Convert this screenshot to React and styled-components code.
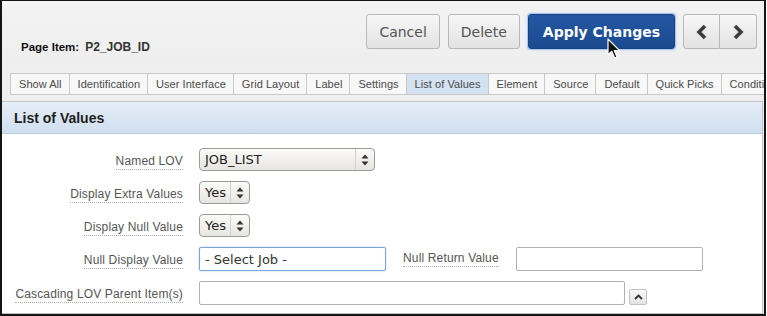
import React from 'react';
import styled, { createGlobalStyle } from 'styled-components';

const GlobalStyle = createGlobalStyle`
  html, body {
    margin: 0;
    padding: 0;
    background: #fff;
  }
  body {
    font-family: "Liberation Sans", Arial, sans-serif;
  }
`;

const Frame = styled.div`
  width: 766px;
  height: 316px;
  box-sizing: border-box;
  border: 2px solid #141414;
  border-top-width: 1px;
  background: #efefef;
  overflow: hidden;
  display: flex;
  flex-direction: column;
`;

const Header = styled.div`
  position: relative;
  height: 64px;
  flex-shrink: 0;
  display: flex;
  align-items: flex-start;
  justify-content: space-between;
  padding: 13px 7px 0 19px;
  box-sizing: border-box;
  background: linear-gradient(#f3f3f3, #eeeeee);
`;

const Title = styled.div`
  margin-top: 26px;
  font-size: 11.5px;
  font-weight: bold;
  color: #111;
  white-space: nowrap;
`;

const ItemName = styled.span`
  margin-left: 6px;
  color: #333;
  font-size: 12px;
`;

const Actions = styled.div`
  display: flex;
  align-items: center;
  gap: 8px;
`;

const Button = styled.button`
  height: 35px;
  box-sizing: border-box;
  padding: 0 ${(p) => (p.$primary ? 14 : 12)}px;
  border-radius: 3px;
  font-family: "DejaVu Sans", sans-serif;
  font-size: 14px;
  font-weight: ${(p) => (p.$primary ? 'bold' : 'normal')};
  color: ${(p) => (p.$primary ? '#fff' : '#555')};
  border: 1px solid ${(p) => (p.$primary ? '#1a4282' : '#b8b8b8')};
  background: ${(p) =>
    p.$primary
      ? 'linear-gradient(#2457a3, #1b4a90)'
      : 'linear-gradient(#f7f7f7, #e2e2e2)'};
  box-shadow: ${(p) => (p.$primary ? '0 0 0 1px #a9c8ee, 0 0 3px 1px #c4daf4' : 'none')};
  cursor: pointer;
`;

const NavGroup = styled.div`
  display: flex;
`;

const NavButton = styled.button`
  width: 37px;
  height: 35px;
  box-sizing: border-box;
  padding: 0;
  display: flex;
  align-items: center;
  justify-content: center;
  border: 1px solid #b8b8b8;
  border-radius: ${(p) => (p.$side === 'left' ? '3px 0 0 3px' : '0 3px 3px 0')};
  border-left-width: ${(p) => (p.$side === 'left' ? 1 : 0)}px;
  background: linear-gradient(#f7f7f7, #e2e2e2);
`;

const Cursor = styled.svg`
  position: absolute;
  left: 605px;
  top: 37px;
  width: 14px;
  height: 22px;
`;

const TabBar = styled.div`
  display: flex;
  margin: 8px 0 0 8px;
  height: 22px;
  flex-shrink: 0;
  overflow: hidden;
`;

const Tab = styled.div`
  flex-shrink: 0;
  height: 22px;
  box-sizing: border-box;
  padding: 0 7px 0 8px;
  display: flex;
  align-items: center;
  font-size: 11px;
  letter-spacing: 0.05px;
  color: #4a4a4a;
  white-space: nowrap;
  border: 1px solid #c9c9c9;
  border-left-width: ${(p) => (p.$first ? 1 : 0)}px;
  background: ${(p) => (p.$active ? '#d3e1f1' : '#f8f8f8')};
`;

const Region = styled.div`
  margin: 6px 1px 0 0;
  flex: 1;
  border: 1px solid #c2c2c2;
  border-left: none;
  background: #fff;
`;

const RegionHeader = styled.div`
  height: 32px;
  box-sizing: border-box;
  padding-left: 12px;
  display: flex;
  align-items: center;
  font-size: 14px;
  font-weight: bold;
  color: #1e1e1e;
  border-bottom: 1px solid #b9c9dc;
  background: linear-gradient(#e6eef8, #cfdeef);
`;

const Body = styled.div`
  padding-top: 14px;
  display: flex;
  flex-direction: column;
  gap: 10px;
`;

const Row = styled.div`
  display: flex;
  align-items: center;
  height: ${(p) => p.$h || 23}px;
`;

const LabelCell = styled.div`
  width: 181px;
  flex-shrink: 0;
  text-align: right;
  margin-right: 16px;
`;

const Label = styled.span`
  font-size: 12px;
  letter-spacing: 0.15px;
  color: #555;
  padding-bottom: 1px;
  border-bottom: 1px dotted #aaa;
  white-space: nowrap;
`;

const InlineLabel = styled(Label)`
  margin: 0 17px;
`;

const Select = styled.div`
  width: ${(p) => p.$w}px;
  height: 23px;
  box-sizing: border-box;
  display: flex;
  align-items: center;
  border: 1px solid #9c9a95;
  border-radius: 4px;
  background: linear-gradient(#fbfbfa, #e7e5e0);
  font-family: "DejaVu Sans", sans-serif;
  font-size: 13px;
  color: #222;
`;

const SelectText = styled.span`
  flex: 1;
  padding-left: 5px;
`;

const SelectArrow = styled.span`
  width: 18px;
  height: 100%;
  display: flex;
  align-items: center;
  justify-content: center;
  border-left: 1px solid #d3d1cc;
`;

const TextInput = styled.div`
  width: ${(p) => p.$w}px;
  height: 24px;
  box-sizing: border-box;
  display: flex;
  align-items: center;
  padding-left: 5px;
  border: 1px solid ${(p) => (p.$focus ? '#7ea6d6' : '#b1b1b1')};
  border-radius: 2px;
  background: #fff;
  box-shadow: ${(p) => (p.$focus ? '0 0 2px #a9c6ea' : 'none')};
  font-family: "DejaVu Sans", sans-serif;
  font-size: 13px;
  color: #333;
`;

const SmallButton = styled.div`
  width: 18px;
  height: 16px;
  box-sizing: border-box;
  margin: 7px 0 0 4px;
  display: flex;
  align-items: center;
  justify-content: center;
  border: 1px solid #c3c3c3;
  border-radius: 2px;
  background: linear-gradient(#f7f7f7, #e3e3e3);
`;

const Arrows = () => (
  <svg width="8" height="12" viewBox="0 0 8 12">
    <path d="M4 0.5 L7.5 4.5 L0.5 4.5 Z" fill="#333" />
    <path d="M4 11.5 L7.5 7.5 L0.5 7.5 Z" fill="#333" />
  </svg>
);

const Chevron = ({ dir }) => (
  <svg width="12" height="16" viewBox="0 0 12 16">
    <polyline
      points={dir === 'left' ? '9,2 3,8 9,14' : '3,2 9,8 3,14'}
      fill="none"
      stroke="#3d3d3d"
      strokeWidth="3.6"
      strokeLinejoin="miter"
    />
  </svg>
);

const tabs = [
  'Show All',
  'Identification',
  'User Interface',
  'Grid Layout',
  'Label',
  'Settings',
  'List of Values',
  'Element',
  'Source',
  'Default',
  'Quick Picks',
  'Condition',
];

export default function App() {
  return (
    <>
      <GlobalStyle />
      <Frame>
        <Header>
          <Title>
            Page Item:<ItemName>P2_JOB_ID</ItemName>
          </Title>
          <Actions>
            <Button>Cancel</Button>
            <Button>Delete</Button>
            <Button $primary>Apply Changes</Button>
            <NavGroup>
              <NavButton $side="left">
                <Chevron dir="left" />
              </NavButton>
              <NavButton $side="right">
                <Chevron dir="right" />
              </NavButton>
            </NavGroup>
          </Actions>
          <Cursor viewBox="0 0 14 22">
            <path
              d="M1 1 L1 17 L4.8 13.3 L7.6 20 L10 19 L7.3 12.5 L12.5 12.5 Z"
              fill="#111"
              stroke="#fff"
              strokeWidth="1.2"
              strokeLinejoin="round"
            />
          </Cursor>
        </Header>

        <TabBar>
          {tabs.map((t, i) => (
            <Tab key={t} $first={i === 0} $active={t === 'List of Values'}>
              {t}
            </Tab>
          ))}
        </TabBar>

        <Region>
          <RegionHeader>List of Values</RegionHeader>
          <Body>
            <Row>
              <LabelCell>
                <Label>Named LOV</Label>
              </LabelCell>
              <Select $w={176}>
                <SelectText>JOB_LIST</SelectText>
                <SelectArrow>
                  <Arrows />
                </SelectArrow>
              </Select>
            </Row>
            <Row>
              <LabelCell>
                <Label>Display Extra Values</Label>
              </LabelCell>
              <Select $w={51}>
                <SelectText>Yes</SelectText>
                <SelectArrow>
                  <Arrows />
                </SelectArrow>
              </Select>
            </Row>
            <Row>
              <LabelCell>
                <Label>Display Null Value</Label>
              </LabelCell>
              <Select $w={51}>
                <SelectText>Yes</SelectText>
                <SelectArrow>
                  <Arrows />
                </SelectArrow>
              </Select>
            </Row>
            <Row $h={24}>
              <LabelCell>
                <Label>Null Display Value</Label>
              </LabelCell>
              <TextInput $w={187} $focus>
                - Select Job -
              </TextInput>
              <InlineLabel>Null Return Value</InlineLabel>
              <TextInput $w={187} />
            </Row>
            <Row $h={24}>
              <LabelCell>
                <Label>Cascading LOV Parent Item(s)</Label>
              </LabelCell>
              <TextInput $w={426} />
              <SmallButton>
                <svg width="9" height="6" viewBox="0 0 9 6">
                  <polyline points="1,5 4.5,1.5 8,5" fill="none" stroke="#333" strokeWidth="1.8" />
                </svg>
              </SmallButton>
            </Row>
          </Body>
        </Region>
      </Frame>
    </>
  );
}
